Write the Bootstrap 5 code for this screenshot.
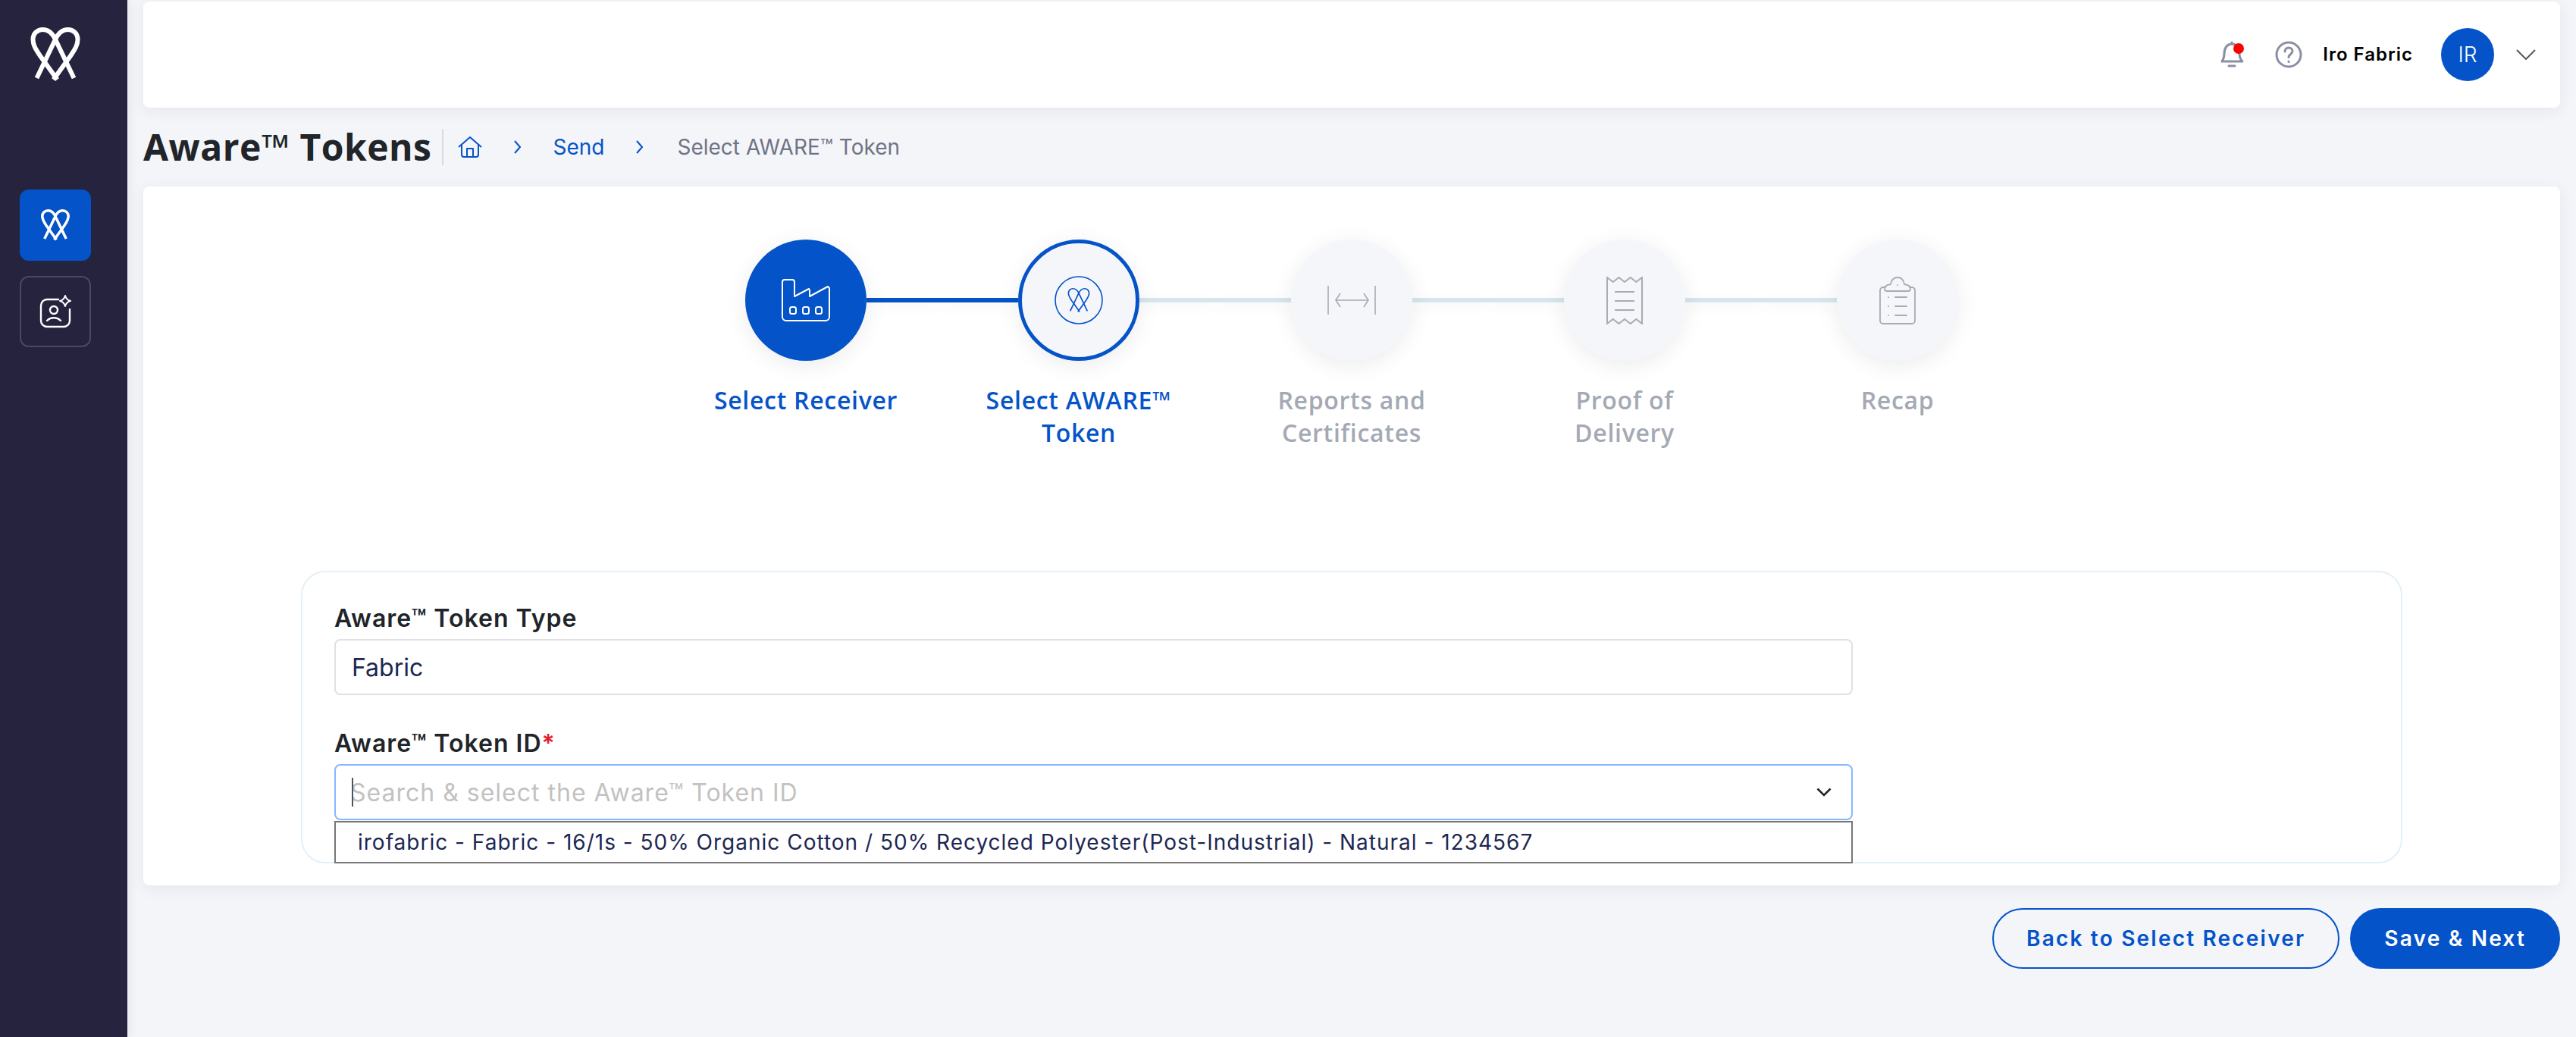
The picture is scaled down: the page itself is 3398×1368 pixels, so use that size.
<!DOCTYPE html>
<html lang="en">

<head>
  <meta charset="UTF-8" />
  <meta name="viewport" content="width=device-width, initial-scale=1.0" />
  <title>Aware Tokens</title>
  <link href="https://cdn.jsdelivr.net/npm/bootstrap@5.3.3/dist/css/bootstrap.min.css" rel="stylesheet" />
  <style>
    body { background: #f4f5f9; font-family: "Inter", sans-serif; color: #212529; }
    .side-rail { width: 168px; flex: none; background: #26233f; padding: 36px 0 0 26px; box-shadow: 4px 0 12px rgba(0, 0, 0, .06); }
    .side-logo { width: 94px; height: 72px; margin-bottom: 142px; }
    .side-btn { width: 94px; height: 94px; border-radius: 12px; border: 2px solid #4b4960; margin-bottom: 20px; }
    .side-btn.is-on { background: #0553c9; border-color: #0553c9; }
    .page-wrap { padding: 2px 21px 0; min-width: 0; }
    .top-bar { height: 140px; border-radius: 8px; padding-right: 32px; box-shadow: 0 4px 20px rgba(30, 40, 80, .07); }
    .bell-wrap { margin-right: 40px; }
    .bell-dot { width: 14px; height: 14px; left: 17px; top: 3px; background: #f00; }
    .user-name { font-size: 24px; font-weight: 600; color: #000; letter-spacing: 1px; margin: 0 37px 0 27px; }
    .user-pic { width: 70px; height: 70px; background: #0553c9; color: #fff; font-size: 28px; font-weight: 300; margin-right: 29px; }
    .title-row { height: 104px; }
    .page-title { font-family: "Open Sans", sans-serif; font-weight: 700; font-size: 48px; letter-spacing: .5px; line-height: 1; margin: 0; padding-right: 14px; border-right: 2px solid #d9dbe1; height: 48px; display: flex; align-items: center; color: #212529; }
    .crumbs { margin: 0 0 0 19px; font-size: 28px; align-items: center; }
    .crumbs .breadcrumb-item + .breadcrumb-item { padding-left: 0; }
    .crumbs .breadcrumb-item + .breadcrumb-item::before { display: none; }
    .crumbs a { color: #0553c9; text-decoration: none; }
    .crumb-now { color: #6f7484; }
    .crumb-sep { margin: 0 42px; }
    .crumb-sep.is-last { margin-right: 45px; }
    .main-panel { height: 922px; border-radius: 8px; padding-top: 70px; box-shadow: 0 4px 20px rgba(30, 40, 80, .07); }
    .step-item { width: 360px; }
    .step-head { height: 160px; }
    .step-link { flex: 1; height: 6px; background: #d6e6ec; box-shadow: 0 6px 18px rgba(0, 0, 0, .05); }
    .step-link.is-done { background: #0553c9; }
    .step-link.is-none { background: transparent; box-shadow: none; }
    .step-dot { width: 160px; height: 160px; flex: none; background: #f5f6f9; box-shadow: 0 6px 30px rgba(0, 0, 0, .08); z-index: 1; }
    .step-dot.is-done { background: #0553c9; }
    .step-dot.is-now { border: 5px solid #0553c9; }
    .step-text { width: 250px; margin: 30px auto 0; font-family: "Open Sans", sans-serif; font-size: 32px; font-weight: 600; letter-spacing: .7px; line-height: 43px; text-align: center; color: #a4a9b4; }
    .step-text.is-on { color: #0553c9; }
    .form-box { margin: 161px 208px 0; height: 386px; border: 2px solid #e3f0f8; border-radius: 32px; padding: 39px 42px 0; }
    .field-col { width: 2003px; }
    .field-lab { display: block; font-size: 32px; font-weight: 600; letter-spacing: 1px; line-height: 42px; padding-top: 1px; margin-bottom: 6px; color: #212529; }
    .req { color: #e3212d; }
    .field-inp.form-control { height: 74px; border: 2px solid #dfe0e6; border-radius: 8px; font-size: 32px; padding: 0 21px; color: #1c2752; background: #fff; margin-bottom: 42px; }
    .field-sel.form-control { height: 74px; border: 2px solid #86b7fe; border-radius: 8px; font-size: 32px; padding: 0 19px; letter-spacing: 1px; }
    .field-sel::placeholder { color: #c2c2c2; opacity: 1; }
    .sel-wrap::before { content: ""; position: absolute; left: 23px; top: 18px; width: 2px; height: 38px; background: #4c5468; }
    .sel-arrow { position: absolute; right: 28px; top: 31px; }
    .sel-menu { position: absolute; left: 0; right: 0; top: 75px; height: 56px; background: #fff; border: 2px solid #767676; font-size: 28px; line-height: 52px; padding-left: 29px; color: #1c2752; letter-spacing: 1px; }
    .action-row { margin-top: 30px; gap: 14px; }
    .act-btn { height: 80px; font-size: 28px; font-weight: 600; letter-spacing: 2.2px; padding: 0 43px; border: 2px solid #0553c9; display: flex; align-items: center; }
    .act-btn.is-line { color: #0553c9; background: transparent; }
    .act-btn.is-fill { color: #fff; background: #0553c9; }
  </style>
</head>

<body>
  <svg width="0" height="0" class="position-absolute">
    <symbol id="awareMark" viewBox="0 0 65 72">
      <path fill="none" stroke="currentColor" stroke-width="6" d="M35 69 12 37C6 28 3 23 3 16 3 8 9 3 16 3c8 0 13 5 17 14L57 67" />
      <path fill="none" stroke="currentColor" stroke-width="6" d="M30 69 53 37c6-9 9-14 9-21 0-8-6-13-13-13-8 0-13 5-17 14L8 67" />
    </symbol>
  </svg>

  <div class="d-flex min-vh-100">
    <aside class="side-rail">
      <svg class="side-logo d-block text-white" viewBox="0 0 94 72"><use href="#awareMark" /></svg>
      <div class="side-btn is-on d-flex align-items-center justify-content-center text-white">
        <svg width="38" height="42"><use href="#awareMark" /></svg>
      </div>
      <div class="side-btn d-flex align-items-center justify-content-center">
        <svg width="44" height="44" viewBox="0 0 44 44" fill="none" stroke="#fff" stroke-width="2.4" stroke-linecap="round">
          <path d="M26 6H11a8 8 0 0 0-8 8v20a8 8 0 0 0 8 8h22a8 8 0 0 0 8-8V19" />
          <circle cx="20" cy="20" r="5" />
          <path d="M11 34c5-5 13-5 18 0" />
          <path stroke-width="2" stroke-linejoin="round" d="M35 1c1 4 3 6 7 7-4 1-6 3-7 7-1-4-3-6-7-7 4-1 6-3 7-7z" />
        </svg>
      </div>
    </aside>

    <div class="page-wrap flex-grow-1">
      <header class="top-bar bg-white d-flex align-items-center justify-content-end">
        <span class="bell-wrap position-relative d-inline-flex">
          <svg width="32" height="36" viewBox="0 0 32 36" fill="none" stroke="#8a8fa3" stroke-width="3" stroke-linejoin="round" stroke-linecap="round">
            <path d="M15 4V2M5 17c0-8 4-13 10-13s10 5 10 13c0 5 1 7 4 10H2c2-3 3-5 3-10zM11 33h8" />
          </svg>
          <span class="bell-dot position-absolute rounded-circle"></span>
        </span>
        <svg width="36" height="36" viewBox="0 0 36 36" fill="none" stroke="#8a8fa3" stroke-width="3" stroke-linecap="round">
          <circle cx="18" cy="18" r="16" />
          <path d="M13 14c0-3 2-5 5-5s5 2 5 4.5c0 4-5 4-5 8" />
          <path d="M18 27v.4" />
        </svg>
        <span class="user-name">Iro Fabric</span>
        <span class="user-pic rounded-circle d-flex align-items-center justify-content-center">IR</span>
        <svg width="26" height="14" viewBox="0 0 26 14" fill="none" stroke="#55585f" stroke-width="2"><path d="M1 1l12 12L25 1" /></svg>
      </header>

      <div class="title-row d-flex align-items-center">
        <h1 class="page-title">Aware™ Tokens</h1>
        <ol class="breadcrumb crumbs">
          <li class="breadcrumb-item d-flex align-items-center">
            <a href="#" class="d-flex">
              <svg width="32" height="28" viewBox="0 0 32 28" fill="none" stroke="#0553c9" stroke-width="2" stroke-linejoin="round">
                <path d="M1 14 16 1l15 13M5 11v13a3 3 0 0 0 3 3h16a3 3 0 0 0 3-3V11M12 27V16h8v11" />
              </svg>
            </a>
          </li>
          <li class="breadcrumb-item d-flex align-items-center">
            <svg class="crumb-sep" width="9" height="18" viewBox="0 0 9 18" fill="none" stroke="#0553c9" stroke-width="2"><path d="M1 1l7 8-7 8" /></svg>
            <a href="#">Send</a>
          </li>
          <li class="breadcrumb-item d-flex align-items-center">
            <svg class="crumb-sep is-last" width="9" height="18" viewBox="0 0 9 18" fill="none" stroke="#0553c9" stroke-width="2"><path d="M1 1l7 8-7 8" /></svg>
            <span class="crumb-now">Select AWARE™ Token</span>
          </li>
        </ol>
      </div>

      <main class="main-panel bg-white">
        <div class="d-flex justify-content-center">
          <div class="step-item">
            <div class="step-head d-flex align-items-center">
              <span class="step-link is-none"></span>
              <span class="step-dot is-done rounded-circle d-flex align-items-center justify-content-center">
                <svg width="64" height="56" viewBox="0 0 64 56" fill="none" stroke="#fff" stroke-width="2" stroke-linejoin="round">
                  <path d="M1 4a3 3 0 0 1 3-3h10a3 3 0 0 1 3 3v19l19-10 1 2v8l24-13 2 2v38a5 5 0 0 1-5 5H6a5 5 0 0 1-5-5z" />
                  <rect x="11" y="37" width="8" height="9" rx="2.5" />
                  <rect x="28" y="37" width="8" height="9" rx="2.5" />
                  <rect x="45" y="37" width="8" height="9" rx="2.5" />
                </svg>
              </span>
              <span class="step-link is-done"></span>
            </div>
            <div class="step-text is-on">Select Receiver</div>
          </div>

          <div class="step-item">
            <div class="step-head d-flex align-items-center">
              <span class="step-link is-done"></span>
              <span class="step-dot is-now rounded-circle d-flex align-items-center justify-content-center">
                <svg width="64" height="64" viewBox="0 0 64 64" fill="none" stroke="#0553c9" stroke-width="1.6">
                  <circle cx="32" cy="32" r="31" />
                  <svg x="17" y="15" width="30" height="34" viewBox="0 0 65 72"><path stroke-width="3.6" d="M35 69 12 37C6 28 3 23 3 16 3 8 9 3 16 3c8 0 13 5 17 14L57 67" /><path stroke-width="3.6" d="M30 69 53 37c6-9 9-14 9-21 0-8-6-13-13-13-8 0-13 5-17 14L8 67" /></svg>
                </svg>
              </span>
              <span class="step-link"></span>
            </div>
            <div class="step-text is-on">Select AWARE™ Token</div>
          </div>

          <div class="step-item">
            <div class="step-head d-flex align-items-center">
              <span class="step-link"></span>
              <span class="step-dot rounded-circle d-flex align-items-center justify-content-center">
                <svg width="64" height="38" viewBox="0 0 64 38" fill="none" stroke="#a7abb6" stroke-width="1.6">
                  <path d="M1 0v38M63 0v38M11 19h43M17 10l-6 9 6 9M48 10l6 9-6 9" />
                </svg>
              </span>
              <span class="step-link"></span>
            </div>
            <div class="step-text">Reports and Certificates</div>
          </div>

          <div class="step-item">
            <div class="step-head d-flex align-items-center">
              <span class="step-link"></span>
              <span class="step-dot rounded-circle d-flex align-items-center justify-content-center">
                <svg width="48" height="63" viewBox="0 0 48 63" fill="none" stroke="#a7abb6" stroke-width="2">
                  <path d="M1 1v61l7.7-6 7.7 6 7.600-6 7.700 6 7.600-6 7.700 6V1l-7.700 6-7.600-6-7.700 6-7.600-6-7.700 6z" />
                  <path d="M11 20h26M11 32h26M11 44h26" />
                </svg>
              </span>
              <span class="step-link"></span>
            </div>
            <div class="step-text">Proof of Delivery</div>
          </div>

          <div class="step-item">
            <div class="step-head d-flex align-items-center">
              <span class="step-link"></span>
              <span class="step-dot rounded-circle d-flex align-items-center justify-content-center">
                <svg width="48" height="63" viewBox="0 0 48 63" fill="none" stroke="#a7abb6" stroke-width="1.8" stroke-linecap="round">
                  <path d="M8 14H5a4 4 0 0 0-4 4v40a4 4 0 0 0 4 4h38a4 4 0 0 0 4-4V18a4 4 0 0 0-4-4h-3" />
                  <path d="M10 19c-2 0-3-1-3-3 0-4 3-5 8-6 1-6 4-9 9-9s8 3 9 9c5 1 8 2 8 6 0 2-1 3-3 3z" />
                  <path d="M24 11v.2M12 27v.2M12 39v.2M12 51v.2M21 27h15M21 39h15M21 51h15" />
                </svg>
              </span>
              <span class="step-link is-none"></span>
            </div>
            <div class="step-text">Recap</div>
          </div>
        </div>

        <form class="form-box">
          <div class="field-col">
            <label class="field-lab" for="tokenType">Aware™ Token Type</label>
            <input id="tokenType" class="form-control field-inp" type="text" value="Fabric" />
            <label class="field-lab" for="tokenId">Aware™ Token ID<span class="req">*</span></label>
            <div class="sel-wrap position-relative">
              <input id="tokenId" class="form-control field-sel" type="text" placeholder="Search &amp; select the Aware™ Token ID" />
              <svg class="sel-arrow" width="20" height="12" viewBox="0 0 20 12" fill="none" stroke="#212529" stroke-width="2.6"><path d="M1.5 1.5 10 10l8.500-8.500" /></svg>
              <div class="sel-menu">irofabric - Fabric - 16/1s - 50% Organic Cotton / 50% Recycled Polyester(Post-Industrial) - Natural - 1234567</div>
            </div>
          </div>
        </form>
      </main>

      <div class="action-row d-flex justify-content-end">
        <button type="button" class="btn rounded-pill act-btn is-line">Back to Select Receiver</button>
        <button type="button" class="btn rounded-pill act-btn is-fill">Save &amp; Next</button>
      </div>
    </div>
  </div>

  <script src="https://cdn.jsdelivr.net/npm/bootstrap@5.3.3/dist/js/bootstrap.bundle.min.js"></script>
</body>

</html>
